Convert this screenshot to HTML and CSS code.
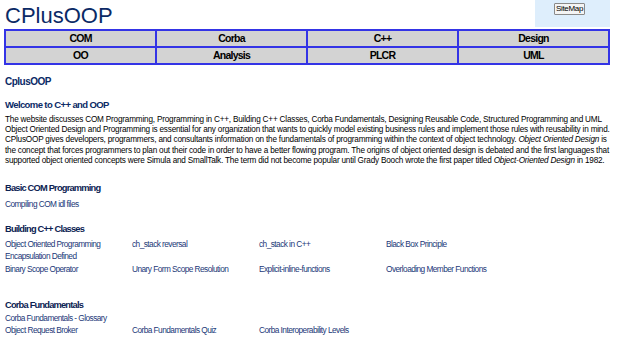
FILE: index.html
```html
<!DOCTYPE html>
<html>
<head>
<meta charset="utf-8">
<link rel="stylesheet" href="styles.css">
</head>
<body>
<div class="page">
  <header class="top">
    <h1 class="logo">CPlusOOP</h1>
    <div class="sitemap-panel"><button class="sitemap">SiteMap</button></div>
  </header>
  <nav class="nav">
    <a>COM</a><a>Corba</a><a>C++</a><a>Design</a>
    <a>OO</a><a>Analysis</a><a>PLCR</a><a>UML</a>
  </nav>
  <h2 class="site">CplusOOP</h2>
  <h3 class="welcome">Welcome to C++ and OOP</h3>
  <p class="intro">The website discusses COM Programming, Programming in C++, Building C++ Classes, Corba Fundamentals, Designing Reusable Code, Structured Programming and UML<br>Object Oriented Design and Programming is essential for any organization that wants to quickly model existing business rules and implement those rules with reusability in mind.<br>CPlusOOP gives developers, programmers, and consultants information on the fundamentals of programming within the context of object technology. <i>Object Oriented Design</i> is the concept that forces programmers to plan out their code in order to have a better flowing program. The origins of object oriented design is debated and the first languages that supported object oriented concepts were Simula and SmallTalk. The term did not become popular until Grady Booch wrote the first paper titled <i>Object-Oriented Design</i> in 1982.</p>

  <section class="sect com">
    <h4>Basic COM Programming</h4>
    <div class="links"><a>Compiling COM idl files</a></div>
  </section>

  <section class="sect classes">
    <h4>Building C++ Classes</h4>
    <div class="links">
      <a>Object Oriented Programming</a><a>ch_stack reversal</a><a>ch_stack in C++</a><a>Black Box Principle</a>
      <a>Encapsulation Defined</a><span></span><span></span><span></span>
      <a>Binary Scope Operator</a><a>Unary Form Scope Resolution</a><a>Explicit-inline-functions</a><a>Overloading Member Functions</a>
    </div>
  </section>

  <section class="sect corba">
    <h4>Corba Fundamentals</h4>
    <div class="links tight">
      <a>Corba Fundamentals - Glossary</a><span></span><span></span><span></span>
      <a>Object Request Broker</a><a>Corba Fundamentals Quiz</a><a>Corba Interoperability Levels</a><span></span>
    </div>
  </section>
</div>
</body>
</html>
```
FILE: styles.css
```css
html, body {
  margin: 0;
  padding: 0;
  background: #fff;
}
body {
  font-family: "Liberation Sans", Arial, sans-serif;
  color: #000;
}
.page {
  padding: 0 10px 0 4px;
}
.top {
  display: flex;
  justify-content: space-between;
  align-items: flex-start;
  height: 29px;
}
.logo {
  margin: 3px 0 0 1px;
  font-size: 22px;
  font-weight: normal;
  color: #0b2a66;
  line-height: 26px;
}
.sitemap-panel {
  width: 75px;
  height: 27px;
  background: #deeefc;
  display: flex;
  justify-content: center;
  align-items: flex-start;
}
.sitemap {
  margin: 3px 6px 0 0;
  width: 31px;
  height: 12px;
  padding: 0;
  font-family: "Liberation Sans", Arial, sans-serif;
  font-size: 8px;
  letter-spacing: -0.3px;
  background: #f4f4f4;
  border: 1px solid #8a8a8a;
  border-radius: 1px;
  color: #000;
  line-height: 10px;
}
.nav {
  display: grid;
  grid-template-columns: repeat(4, 1fr);
  gap: 2px;
  padding: 2px;
  width: 602px;
  background: #3434e6;
}
.nav a {
  display: block;
  background: #d3d3d3;
  height: 15px;
  line-height: 15px;
  text-align: center;
  font-size: 10.5px;
  letter-spacing: -0.75px;
  font-weight: bold;
  color: #000;
}
.site {
  margin: 9.5px 0 0 1px;
  font-size: 10px;
  letter-spacing: -0.5px;
  color: #0b2a66;
  line-height: 14px;
}
.welcome {
  margin: 9px 0 0 1px;
  font-size: 9.5px;
  letter-spacing: -0.6px;
  color: #0b2a66;
  line-height: 13px;
}
.intro {
  margin: 4.3px 0 0 1px;
  font-size: 8.2px;
  letter-spacing: -0.2px;
  line-height: 10.3px;
  color: #000;
  width: 606px;
}
.sect {
  margin-left: 1px;
}
.sect.com {
  margin-top: 16px;
}
.sect.classes {
  margin-top: 13.25px;
}
.sect.corba {
  margin-top: 23.25px;
}
.sect h4 {
  margin: 0;
  font-size: 9.3px;
  letter-spacing: -0.8px;
  line-height: 13px;
  color: #0b2252;
}
.links {
  display: grid;
  grid-template-columns: repeat(4, 127px);
  grid-auto-rows: 12.5px;
  margin-top: 1.5px;
}
.links.tight {
  grid-auto-rows: 12.2px;
  margin-top: 0.3px;
}
.com .links {
  margin-top: 2.25px;
}
.links a {
  font-size: 8.3px;
  letter-spacing: -0.55px;
  line-height: 12.5px;
  color: #1b3878;
  white-space: nowrap;
}
```
